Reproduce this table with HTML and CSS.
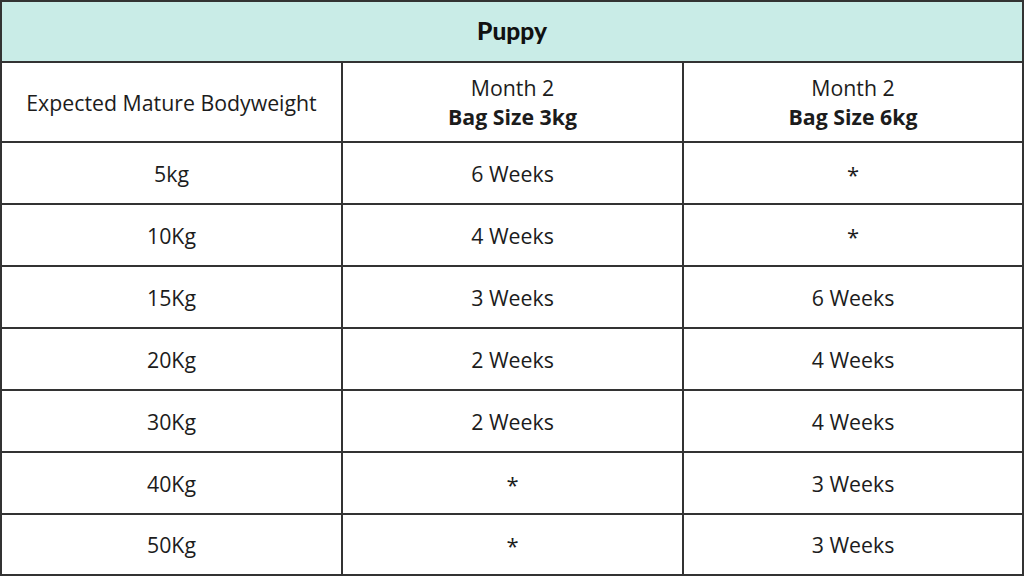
FILE: index.html
```html
<!DOCTYPE html>
<html lang="en">
<head>
<meta charset="utf-8">
<title>Puppy feeding table</title>
<link rel="stylesheet" href="styles.css">
</head>
<body>
<div class="table">
  <div class="cell title">Puppy</div>

  <div class="cell head">Expected Mature Bodyweight</div>
  <div class="cell head"><span>Month 2</span><strong>Bag Size 3kg</strong></div>
  <div class="cell head"><span>Month 2</span><strong>Bag Size 6kg</strong></div>

  <div class="cell">5kg</div><div class="cell">6 Weeks</div><div class="cell star">*</div>
  <div class="cell">10Kg</div><div class="cell">4 Weeks</div><div class="cell star">*</div>
  <div class="cell">15Kg</div><div class="cell">3 Weeks</div><div class="cell">6 Weeks</div>
  <div class="cell">20Kg</div><div class="cell">2 Weeks</div><div class="cell">4 Weeks</div>
  <div class="cell">30Kg</div><div class="cell">2 Weeks</div><div class="cell">4 Weeks</div>
  <div class="cell">40Kg</div><div class="cell star">*</div><div class="cell">3 Weeks</div>
  <div class="cell">50Kg</div><div class="cell star">*</div><div class="cell">3 Weeks</div>
</div>
</body>
</html>
```
FILE: styles.css
```css
* { box-sizing: border-box; }
html, body { margin: 0; padding: 0; background: #ffffff; }
body {
  font-family: "Open Sans", "Liberation Sans", sans-serif;
  color: #1c1c1c;
  width: 1024px;
  height: 576px;
  overflow: hidden;
}
.table {
  display: grid;
  grid-template-columns: 341px 341px 1fr;
  grid-template-rows: 61px 80px repeat(6, 62px) 61px;
  width: 1024px;
  height: 576px;
  border-top: 2px solid #333;
  border-left: 2px solid #333;
}
.cell {
  border-right: 2px solid #333;
  border-bottom: 2px solid #333;
  display: flex;
  align-items: center;
  justify-content: center;
  font-size: 21.3px;
  line-height: 29px;
  text-align: center;
  padding-top: 0;
}
.title {
  grid-column: 1 / 4;
  background: #c9ece7;
  font-family: "Lato", "Open Sans", sans-serif;
  font-weight: 900;
  font-size: 24.5px;
  color: #111;
  padding-bottom: 2px;
}
.head {
  flex-direction: column;
  line-height: 29px;
}
.head strong { font-weight: 700; }
.star { font-size: 22px; padding-top: 2px; }
```
